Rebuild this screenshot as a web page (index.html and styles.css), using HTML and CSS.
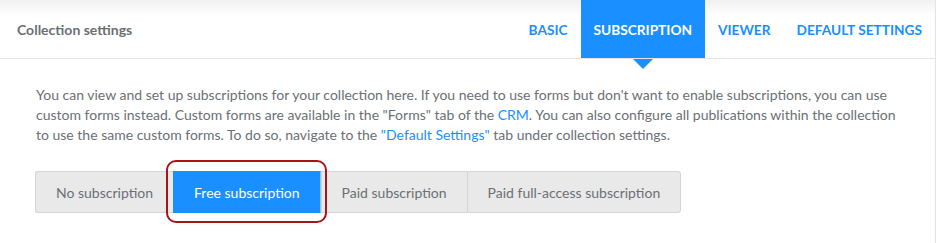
FILE: index.html
```html
<!DOCTYPE html>
<html lang="en">
<head>
    <meta charset="UTF-8">
    <meta name="viewport" content="width=device-width, initial-scale=1.0">
    <title>Collection settings</title>
    <link rel="stylesheet" href="styles.css">
</head>
<body>
    <div class="panel">
        <header class="panel-head">
            <h1 class="panel-title">Collection settings</h1>
            <nav class="tabs">
                <a href="#" class="tab">Basic</a>
                <a href="#" class="tab active">Subscription</a>
                <a href="#" class="tab">Viewer</a>
                <a href="#" class="tab">Default settings</a>
            </nav>
        </header>

        <section class="panel-body">
            <p class="intro">
                You can view and set up subscriptions for your collection here. If you need to use forms but don't want to enable subscriptions, you can use
                custom forms instead. Custom forms are available in the "Forms" tab of the <a href="#">CRM</a>. You can also configure all publications within the collection
                to use the same custom forms. To do so, navigate to the <a href="#">"Default Settings"</a> tab under collection settings.
            </p>

            <div class="btn-group">
                <button class="btn">No subscription</button>
                <button class="btn active">Free subscription</button>
                <button class="btn">Paid subscription</button>
                <button class="btn">Paid full-access subscription</button>
                <span class="highlight"></span>
            </div>
        </section>
    </div>
</body>
</html>
```

FILE: styles.css
```css
:root {
    --accent: #1a8fff;
    --text: #6b7075;
    --border: #e4e4e4;
    --btn-bg: #e9e9e9;
    --btn-border: #d5d5d5;
    --mark: #a8121a;
}

body {
    margin: 0;
    font-family: Lato, "Open Sans", sans-serif;
    background: #fff;
    color: var(--text);
}

.panel {
    width: 935px;
    height: 243px;
    border-right: 1px solid var(--border);
}

.panel-head {
    display: flex;
    justify-content: space-between;
    align-items: stretch;
    height: 58px;
    border-bottom: 1px solid var(--border);
    background: linear-gradient(#f1f1f1, #fff 16px);
}

.panel-title {
    margin: 0;
    padding-left: 17px;
    align-self: center;
    font-size: 14px;
    font-weight: 700;
    color: #6a6f74;
}

.tabs {
    display: flex;
}

.tab {
    position: relative;
    display: flex;
    align-items: center;
    padding: 0 13px;
    color: var(--accent);
    font-size: 13.7px;
    font-weight: 700;
    text-transform: uppercase;
    text-decoration: none;
}

.tab.active {
    background: var(--accent);
    color: #fff;
}

.tab.active::after {
    content: "";
    position: absolute;
    left: 50%;
    bottom: -11px;
    margin-left: -10px;
    border-left: 10px solid transparent;
    border-right: 10px solid transparent;
    border-top: 10px solid var(--accent);
}

.panel-body {
    padding: 26px 36px 0;
}

.intro {
    margin: 0 0 26px;
    font-size: 14px;
    line-height: 20px;
}

.intro a {
    color: var(--accent);
    text-decoration: none;
}

.btn-group {
    position: relative;
    display: inline-flex;
    margin-left: -1px;
}

.btn {
    height: 42px;
    padding: 0 20px;
    border: 1px solid var(--btn-border);
    border-right: none;
    background: var(--btn-bg);
    color: var(--text);
    font-family: inherit;
    font-size: 14px;
}

.btn:first-child {
    border-radius: 3px 0 0 3px;
}

.btn:nth-child(4) {
    border-right: 1px solid var(--btn-border);
    border-radius: 0 3px 3px 0;
}

.btn.active {
    background: var(--accent);
    border-color: var(--accent);
    border-right: 1px solid #8cc4f5;
    color: #fff;
}

.highlight {
    position: absolute;
    left: 131px;
    top: -11px;
    width: 157px;
    height: 59px;
    border: 2px solid var(--mark);
    border-radius: 10px;
    pointer-events: none;
}
```
